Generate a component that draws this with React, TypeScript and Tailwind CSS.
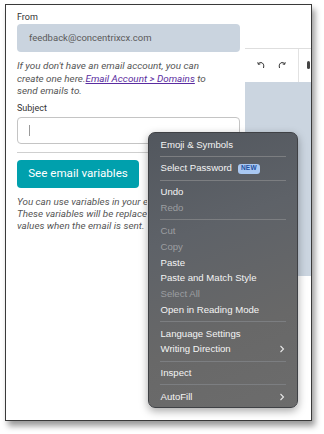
import React from "react";

function MenuItem({ label, disabled, chevron, badge }: { label: string; disabled?: boolean; chevron?: boolean; badge?: boolean }) {
  return (
    <div className={`h-[15.7px] flex items-center pl-[11.5px] pr-[12px] ${disabled ? "text-[#9c9ea1]" : "text-[#f4f4f4]"}`}>
      <span>{label}</span>
      {badge && (
        <span className="ml-[6px] h-[10px] px-[3px] rounded-[3px] bg-[#a9c8f2] text-[#1d4f9e] text-[6.5px] font-bold flex items-center leading-none tracking-[0.2px]">
          NEW
        </span>
      )}
      {chevron && (
        <svg className="ml-auto" width="6" height="8" viewBox="0 0 6 8">
          <path d="M1.5 1 L4.5 4 L1.5 7" fill="none" stroke="#e8e8e8" strokeWidth="1.1" />
        </svg>
      )}
    </div>
  );
}

function Sep() {
  return <div className="h-[1px] bg-[#7c7e81] mx-[11px] my-[3.5px]" />;
}

export default function App() {
  return (
    <div className="relative w-[324px] h-[434px] bg-white overflow-hidden pt-[4px] pl-[5px]" style={{ fontFamily: "Roboto, 'Liberation Sans', sans-serif" }}>
      <div className="w-[307px] h-[417px] border-[1.5px] border-[#3a3a3a] bg-white flex shadow-[3px_5px_6px_rgba(0,0,0,0.4)] overflow-hidden">
        <div className="w-[234px] shrink-0 pl-[11px] pt-[5px] flex flex-col">
          <div className="text-[9px] leading-[14px] text-[#333]">From</div>
          <div className="h-[28px] rounded-[4px] bg-[#cad4df] flex items-center pl-[12px] text-[9.5px] text-[#5a5a5a]">
            feedback@concentrixcx.com
          </div>
          <p className="mt-[8px] text-[9.9px] leading-[12.5px] italic text-[#555] whitespace-nowrap">
            If you don't have an email account, you can
            <br />
            create one here.<span className="text-[#5a2ca0] underline">Email Account &gt; Domains</span> to
            <br />
            send emails to.
          </p>
          <div className="mt-[3px] text-[9px] leading-[14px] text-[#333]">Subject</div>
          <div className="mt-[2px] h-[27px] rounded-[4px] border border-[#c4c4c4] flex items-center pl-[11px]">
            <div className="w-[1px] h-[11px] bg-[#9a9a9a]" />
          </div>
          <div className="mt-[8px] h-[1px] bg-[#cfcfcf]" />
          <div className="mt-[7px] w-[122px] h-[28px] rounded-[4px] bg-[#00a0ad] text-white text-[11.6px] flex items-center justify-center">
            See email variables
          </div>
          <p className="mt-[8.5px] w-[130px] overflow-hidden text-[9.9px] leading-[12px] italic text-[#555] whitespace-nowrap">
            You can use variables in your email template.
            <br />
            These variables will be replaced with actual
            <br />
            values when the email is sent.
          </p>
        </div>
        <div className="ml-[5px] flex-1 flex flex-col">
          <div className="h-[42.5px]" />
          <div className="h-[1px] bg-[#dedede]" />
          <div className="h-[33px] flex items-center relative">
            <svg className="absolute left-[11.5px] top-[12px]" width="8" height="8" viewBox="0 0 8 8">
              <path d="M6.5 7 C7.5 4 6 1.5 3.8 1.5 C2.6 1.5 1.8 2.2 1.3 3" fill="none" stroke="#333" strokeWidth="1" />
              <path d="M0.8 1.2 L1.3 3.4 L3.4 2.9" fill="none" stroke="#333" strokeWidth="1" />
            </svg>
            <svg className="absolute left-[32.5px] top-[12px]" width="8" height="8" viewBox="0 0 8 8">
              <path d="M1.5 7 C0.5 4 2 1.5 4.2 1.5 C5.4 1.5 6.2 2.2 6.7 3" fill="none" stroke="#333" strokeWidth="1" />
              <path d="M7.2 1.2 L6.7 3.4 L4.6 2.9" fill="none" stroke="#333" strokeWidth="1" />
            </svg>
            <div className="absolute left-[52.5px] top-0 h-[33px] w-[1px] bg-[#e2e2e2]" />
            <div className="absolute left-[62px] top-[12px] w-[3px] h-[8px] rounded-full bg-[#444]" />
          </div>
          <div className="h-[194px] bg-[#cbd5e0]" />
        </div>
      </div>

      <div
        className="absolute left-[148px] top-[132px] w-[150px] h-[276px] rounded-[7px] border border-[#3f4145] shadow-[0_3px_8px_rgba(0,0,0,0.35)] pt-[4px] text-[9.6px]"
        style={{
          fontFamily: "'Liberation Sans', Arial, sans-serif",
          background: "linear-gradient(160deg, #52575e 0%, #5e6268 35%, #686868 70%, #6c6c6c 100%)",
        }}
      >
        <MenuItem label="Emoji & Symbols" />
        <Sep />
        <MenuItem label="Select Password" badge />
        <Sep />
        <MenuItem label="Undo" />
        <MenuItem label="Redo" disabled />
        <Sep />
        <MenuItem label="Cut" disabled />
        <MenuItem label="Copy" disabled />
        <MenuItem label="Paste" />
        <MenuItem label="Paste and Match Style" />
        <MenuItem label="Select All" disabled />
        <MenuItem label="Open in Reading Mode" />
        <Sep />
        <MenuItem label="Language Settings" />
        <MenuItem label="Writing Direction" chevron />
        <Sep />
        <MenuItem label="Inspect" />
        <Sep />
        <MenuItem label="AutoFill" chevron />
      </div>
    </div>
  );
}
